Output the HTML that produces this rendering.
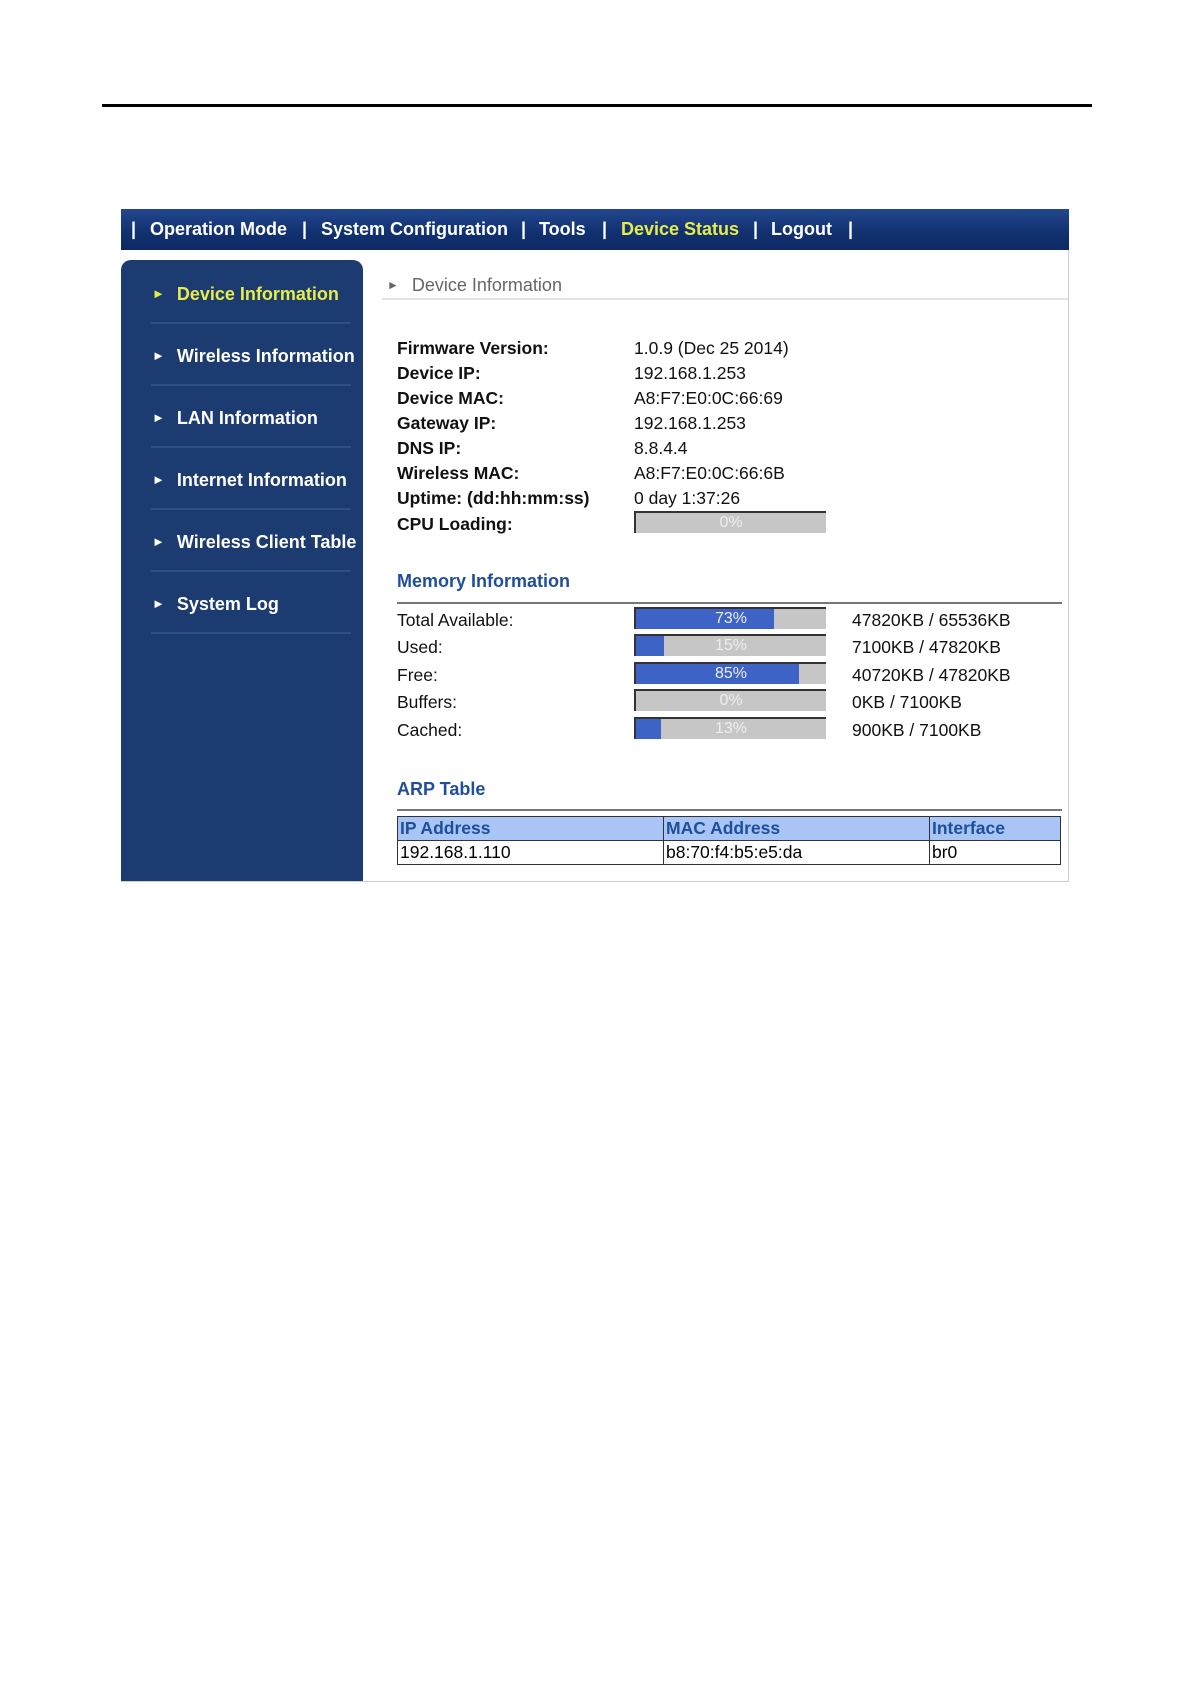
<!DOCTYPE html>
<html><head><meta charset="utf-8"><style>
body{margin:0;width:1190px;height:1684px;background:#fff;position:relative;font-family:"Liberation Sans",Arial,sans-serif;overflow:hidden}
.a{position:absolute}
#rule{left:102px;top:104px;width:990px;height:3px;background:#000}
#nav{left:121px;top:209px;width:948px;height:41px;background:linear-gradient(#23478f,#10306e 60%,#0d2a63);color:#fff;font-weight:bold;font-size:18px;line-height:41px;white-space:nowrap}
#nav span{position:absolute;top:0}
#box{left:121px;top:250px;width:947px;height:631px;border-right:1px solid #ccc;border-bottom:1px solid #ccc}
#side{left:121px;top:260px;width:242px;height:621px;background:#1c3b70;border-radius:10px 10px 0 0}
.si{position:absolute;left:31px;color:#fff;font-weight:bold;font-size:18px;white-space:nowrap}
.si b{font-size:13px;margin-right:12px;position:relative;top:-2px}
.sep{position:absolute;left:30px;width:200px;height:2px;background:#2c4f88}
.t{position:absolute;font-size:17.5px;color:#111;white-space:nowrap}
.bold{font-weight:bold}
.h{color:#1f4e9a;font-weight:bold;font-size:18px}
.bar{position:absolute;left:634px;width:190px;height:20px;background:#c6c6c6;border-top:2px solid #333;border-left:2px solid #333}
.bar i{position:absolute;left:0;top:0;bottom:0;background:#3d63c7}
.bar span{position:absolute;left:0;right:0;text-align:center;color:#eee;font-size:16px;line-height:20px}
table{position:absolute;left:397px;top:816px;width:664px;border-collapse:collapse;font-size:17.5px}
td{border:1px solid #333;height:23px;padding:0 2px;line-height:23px}
tr.hd td{background:#a8c5f5;color:#1f4e9a;font-weight:bold}
</style></head><body>
<div id="rule" class="a"></div>
<div id="nav" class="a">
<span style="left:10px">|</span><span style="left:29px">Operation Mode</span>
<span style="left:181px">|</span><span style="left:200px">System Configuration</span>
<span style="left:400px">|</span><span style="left:418px">Tools</span>
<span style="left:481px">|</span><span style="left:500px;color:#e6ec4a">Device Status</span>
<span style="left:632px">|</span><span style="left:650px">Logout</span>
<span style="left:727px">|</span></div>
<div id="box" class="a"></div>
<div id="side" class="a">
<div class="si" style="top:24px;color:#e6ec4a"><b>►</b>Device Information</div><div class="sep" style="top:62px"></div>
<div class="si" style="top:86px"><b>►</b>Wireless Information</div><div class="sep" style="top:124px"></div>
<div class="si" style="top:148px"><b>►</b>LAN Information</div><div class="sep" style="top:186px"></div>
<div class="si" style="top:210px"><b>►</b>Internet Information</div><div class="sep" style="top:248px"></div>
<div class="si" style="top:272px"><b>►</b>Wireless Client Table</div><div class="sep" style="top:310px"></div>
<div class="si" style="top:334px"><b>►</b>System Log</div><div class="sep" style="top:372px"></div>
</div>
<div class="t" style="left:387px;top:275px;color:#666;font-size:18px"><span style="font-size:12px;margin-right:13px;position:relative;top:-2px">►</span>Device Information</div>
<div class="a" style="left:382px;top:298px;width:686px;height:2px;background:#e4e4e4"></div>
<div class="t bold" style="left:397px;top:338px">Firmware Version:</div><div class="t" style="left:634px;top:338px">1.0.9 (Dec 25 2014)</div>
<div class="t bold" style="left:397px;top:363px">Device IP:</div><div class="t" style="left:634px;top:363px">192.168.1.253</div>
<div class="t bold" style="left:397px;top:388px">Device MAC:</div><div class="t" style="left:634px;top:388px">A8:F7:E0:0C:66:69</div>
<div class="t bold" style="left:397px;top:413px">Gateway IP:</div><div class="t" style="left:634px;top:413px">192.168.1.253</div>
<div class="t bold" style="left:397px;top:438px">DNS IP:</div><div class="t" style="left:634px;top:438px">8.8.4.4</div>
<div class="t bold" style="left:397px;top:463px">Wireless MAC:</div><div class="t" style="left:634px;top:463px">A8:F7:E0:0C:66:6B</div>
<div class="t bold" style="left:397px;top:488px">Uptime: (dd:hh:mm:ss)</div><div class="t" style="left:634px;top:488px">0 day 1:37:26</div>
<div class="t bold" style="left:397px;top:514px">CPU Loading:</div>
<div class="bar" style="top:511px"><span>0%</span></div>
<div class="t h" style="left:397px;top:571px">Memory Information</div>
<div class="a" style="left:397px;top:602px;width:665px;height:2px;background:#777"></div>
<div class="t" style="left:397px;top:610px">Total Available:</div><div class="bar" style="top:607px"><i style="width:138px"></i><span>73%</span></div><div class="t" style="left:852px;top:610px">47820KB / 65536KB</div>
<div class="t" style="left:397px;top:637px">Used:</div><div class="bar" style="top:634px"><i style="width:28px"></i><span>15%</span></div><div class="t" style="left:852px;top:637px">7100KB / 47820KB</div>
<div class="t" style="left:397px;top:665px">Free:</div><div class="bar" style="top:662px"><i style="width:163px"></i><span>85%</span></div><div class="t" style="left:852px;top:665px">40720KB / 47820KB</div>
<div class="t" style="left:397px;top:692px">Buffers:</div><div class="bar" style="top:689px"><span>0%</span></div><div class="t" style="left:852px;top:692px">0KB / 7100KB</div>
<div class="t" style="left:397px;top:720px">Cached:</div><div class="bar" style="top:717px"><i style="width:25px"></i><span>13%</span></div><div class="t" style="left:852px;top:720px">900KB / 7100KB</div>
<div class="t h" style="left:397px;top:779px">ARP Table</div>
<div class="a" style="left:397px;top:809px;width:665px;height:2px;background:#777"></div>
<table><tr class="hd"><td style="width:261px">IP Address</td><td style="width:261px">MAC Address</td><td>Interface</td></tr>
<tr><td>192.168.1.110</td><td>b8:70:f4:b5:e5:da</td><td>br0</td></tr></table>
</body></html>
